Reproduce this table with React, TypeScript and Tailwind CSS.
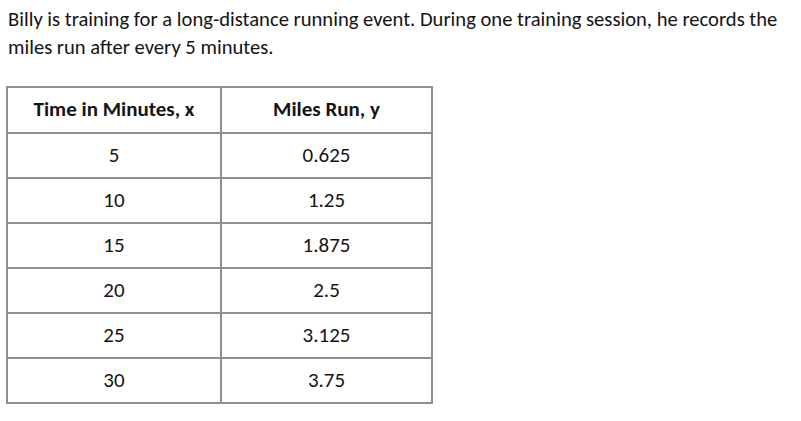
import React from "react";

const rows: [string, string][] = [
  ["5", "0.625"],
  ["10", "1.25"],
  ["15", "1.875"],
  ["20", "2.5"],
  ["25", "3.125"],
  ["30", "3.75"],
];

export default function App() {
  return (
    <div
      className="w-[801px] h-[421px] bg-white text-[#141414] overflow-hidden"
      style={{ fontFamily: "Carlito, Lato, 'Liberation Sans', sans-serif" }}
    >
      <p className="pl-[8px] pt-[5px] pr-[4px] text-[20.6px] leading-[28px]">
        Billy is training for a long-distance running event. During one training session, he records the miles run after every 5 minutes.
      </p>
      <table className="mt-[25px] ml-[6px] w-[427px] border-collapse border-2 border-[#6e6e6e] text-[21px]">
        <thead>
          <tr className="h-[46px]">
            <th className="w-[214px] border-2 border-[#8f8f8f] font-bold text-center">Time in Minutes, x</th>
            <th className="border-2 border-[#8f8f8f] font-bold text-center">Miles Run, y</th>
          </tr>
        </thead>
        <tbody>
          {rows.map(([x, y]) => (
            <tr key={x} className="h-[45px]">
              <td className="border-2 border-[#8f8f8f] text-center">{x}</td>
              <td className="border-2 border-[#8f8f8f] text-center">{y}</td>
            </tr>
          ))}
        </tbody>
      </table>
    </div>
  );
}
